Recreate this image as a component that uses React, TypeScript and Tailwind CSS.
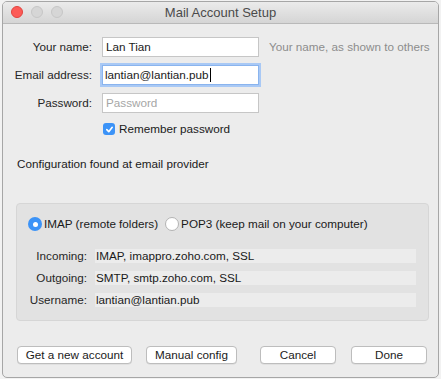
import React from "react";

const font = { fontFamily: '"Liberation Sans", Arial, sans-serif' };

function Label({ children, w }: { children: React.ReactNode; w: string }) {
  return <div className={`${w} text-right text-[11.7px] text-[#262626] leading-none`}>{children}</div>;
}

export default function App() {
  return (
    <div className="w-[441px] h-[379px] bg-[#f2f2f2] pl-[2px] pt-[1px] overflow-hidden" style={font}>
      <div className="w-[437px] h-[377px] bg-[#ececec] border border-[#a6a6a6] rounded-[5px] overflow-hidden flex flex-col">
        {/* Title bar */}
        <div className="h-[22px] shrink-0 relative bg-gradient-to-b from-[#ebebeb] to-[#d5d5d5] border-b border-[#b9b9b9] flex items-center justify-center">
          <div className="absolute left-[8px] top-[4px] flex gap-[8px]">
            <div className="w-[12px] h-[12px] rounded-full bg-[#fc5b57] border border-[#e0443e]" />
            <div className="w-[12px] h-[12px] rounded-full bg-[#d6d6d6] border border-[#c6c6c6]" />
            <div className="w-[12px] h-[12px] rounded-full bg-[#d6d6d6] border border-[#c6c6c6]" />
          </div>
          <div className="text-[13px] text-[#4a4a4a] leading-none">Mail Account Setup</div>
        </div>

        {/* Form */}
        <div className="flex flex-col pt-[13px] text-[11.7px]">
          <div className="flex items-center h-[20px]">
            <Label w="w-[89px]">Your name:</Label>
            <div className="ml-[10px] w-[157px] h-[20px] bg-white border border-[#c6c6c6] flex items-center px-[3px] text-[#1a1a1a]">Lan Tian</div>
            <div className="ml-[10px] text-[#8c8c8c] leading-none">Your name, as shown to others</div>
          </div>
          <div className="flex items-center h-[20px] mt-[8px]">
            <Label w="w-[89px]">Email address:</Label>
            <div className="ml-[10px] w-[157px] h-[20px] bg-white border border-[#8ab4ee] ring-[2px] ring-[#a9c9f5] flex items-center px-[2px] text-[#1a1a1a]">
              lantian@lantian.pub<span className="inline-block w-[1px] h-[14px] bg-black ml-[1px]" />
            </div>
          </div>
          <div className="flex items-center h-[20px] mt-[8px]">
            <Label w="w-[89px]">Password:</Label>
            <div className="ml-[10px] w-[157px] h-[20px] bg-white border border-[#c6c6c6] flex items-center px-[3px] text-[#a6a6a6]">Password</div>
          </div>
          <div className="flex items-center h-[14px] mt-[9px] pl-[100px]">
            <div className="w-[12px] h-[12px] rounded-[3px] bg-[#3c93f7] flex items-center justify-center">
              <svg width="9" height="9" viewBox="0 0 10 10">
                <path d="M2 5.2 L4.2 7.4 L8 2.6" fill="none" stroke="white" strokeWidth="1.8" strokeLinecap="round" strokeLinejoin="round" />
              </svg>
            </div>
            <div className="ml-[4px] text-[#1a1a1a] leading-none">Remember password</div>
          </div>
          <div className="mt-[21px] pl-[14px] text-[#1a1a1a] leading-none h-[14px] flex items-center">Configuration found at email provider</div>
        </div>

        {/* Group */}
        <div className="mt-[32px] ml-[13px] w-[413px] h-[118px] bg-[#e2e2e2] border border-[#d6d6d6] rounded-[4px] flex flex-col text-[11.7px]">
          <div className="flex items-center h-[14px] mt-[13px] pl-[11px]">
            <div className="w-[14px] h-[14px] rounded-full bg-[#3c93f7] flex items-center justify-center">
              <div className="w-[5px] h-[5px] rounded-full bg-white" />
            </div>
            <div className="ml-[2px] text-[#1a1a1a] leading-none">IMAP (remote folders)</div>
            <div className="ml-[7px] w-[14px] h-[14px] rounded-full bg-white border border-[#b3b3b3]" />
            <div className="ml-[2px] text-[#1a1a1a] leading-none">POP3 (keep mail on your computer)</div>
          </div>
          <div className="flex flex-col gap-[8px] mt-[18px]">
            {[
              ["Incoming:", "IMAP, imappro.zoho.com, SSL"],
              ["Outgoing:", "SMTP, smtp.zoho.com, SSL"],
              ["Username:", "lantian@lantian.pub"],
            ].map(([l, v]) => (
              <div key={l} className="flex items-center h-[14px]">
                <Label w="w-[70px]">{l}</Label>
                <div className="ml-[8px] w-[321px] h-[14px] bg-[#ececec] flex items-center px-[1px] text-[#1a1a1a] leading-none">{v}</div>
              </div>
            ))}
          </div>
        </div>

        {/* Buttons */}
        <div className="flex items-center mt-[25px] pl-[14px] text-[11.7px] text-[#1a1a1a]">
          <button className="w-[115px] h-[18px] bg-white border border-[#bdbdbd] rounded-[4px] leading-none shadow-[0_0.5px_0.5px_rgba(0,0,0,0.1)]">Get a new account</button>
          <button className="ml-[14px] w-[91px] h-[18px] bg-white border border-[#bdbdbd] rounded-[4px] leading-none shadow-[0_0.5px_0.5px_rgba(0,0,0,0.1)]">Manual config</button>
          <button className="ml-[23px] w-[76px] h-[18px] bg-white border border-[#bdbdbd] rounded-[4px] leading-none shadow-[0_0.5px_0.5px_rgba(0,0,0,0.1)]">Cancel</button>
          <button className="ml-[15px] w-[76px] h-[18px] bg-white border border-[#bdbdbd] rounded-[4px] leading-none shadow-[0_0.5px_0.5px_rgba(0,0,0,0.1)]">Done</button>
        </div>
      </div>
    </div>
  );
}
